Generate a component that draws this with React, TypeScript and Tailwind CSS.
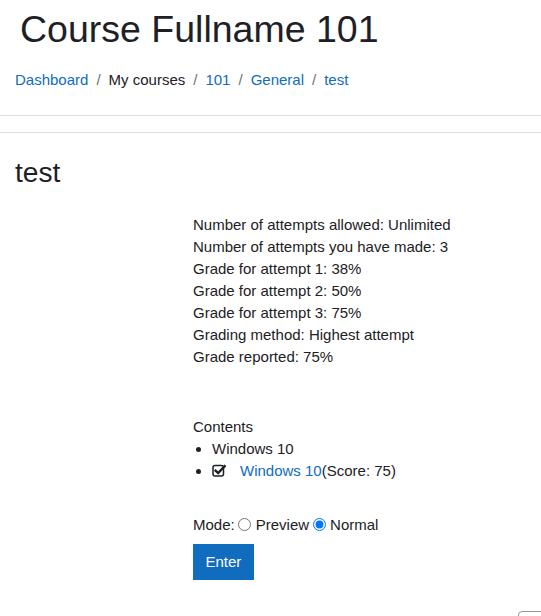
const crumbs: { label: string; link: boolean }[] = [
  { label: "Dashboard", link: true },
  { label: "My courses", link: false },
  { label: "101", link: true },
  { label: "General", link: true },
  { label: "test", link: true },
];

const info = [
  "Number of attempts allowed: Unlimited",
  "Number of attempts you have made: 3",
  "Grade for attempt 1: 38%",
  "Grade for attempt 2: 50%",
  "Grade for attempt 3: 75%",
  "Grading method: Highest attempt",
  "Grade reported: 75%",
];

function CheckSquareIcon() {
  return (
    <svg width="14" height="14" viewBox="0 0 14 14" className="inline-block align-[-1px]">
      <rect x="1" y="2.5" width="10.5" height="10.5" rx="2" fill="none" stroke="#1d2125" strokeWidth="1.5" />
      <path d="M3.6 7.6 L6.2 10.1 L12.6 3.2" fill="none" stroke="#1d2125" strokeWidth="2.4" strokeLinecap="square" />
    </svg>
  );
}

export default function App() {
  return (
    <div className="min-h-screen bg-white text-[#1d2125] font-['Liberation_Sans',Arial,sans-serif] text-[15px] leading-[22px]">
      {/* Page header */}
      <header className="px-[15px]">
        <h1 className="pl-[5px] pt-[7px] text-[37.5px] leading-[45px] font-normal">Course Fullname 101</h1>
        <nav className="mt-[17px] flex items-center">
          {crumbs.map((c, i) => (
            <span key={c.label} className="flex items-center">
              {i > 0 && <span className="px-2 text-[#6a737b]">/</span>}
              <span className={c.link ? "text-[#0f6cbf]" : ""}>{c.label}</span>
            </span>
          ))}
        </nav>
      </header>

      <div className="mt-[24px] border-t border-[#dee2e6]" />
      <div className="mt-4 border-t border-[#dee2e6]" />

      {/* Activity */}
      <main className="px-[15px]">
        <h2 className="mt-[22.5px] text-[28.125px] leading-[33.75px] font-normal">test</h2>

        <div className="ml-[178px] mt-[24.5px]">
          <div>
            {info.map((line) => (
              <p key={line}>{line}</p>
            ))}
          </div>

          <div className="mt-[48px]">
            <p>Contents</p>
            <ul className="list-disc pl-[19px]">
              <li>Windows 10</li>
              <li>
                <span className="mr-[14px]">
                  <CheckSquareIcon />
                </span>
                <span className="text-[#0f6cbf]">Windows 10</span>(Score: 75)
              </li>
            </ul>
          </div>

          <div className="mt-[32px] flex items-center">
            <span>Mode:</span>
            <input type="radio" name="mode" className="ml-[3.5px] mr-[4.5px] w-[13px] h-[13px]" />
            <span>Preview</span>
            <input type="radio" name="mode" defaultChecked className="ml-[3.5px] mr-[4.5px] w-[13px] h-[13px]" />
            <span>Normal</span>
          </div>

          <button className="mt-[8.5px] h-9 px-[12.5px] bg-[#0f6cbf] text-white leading-[22px]">Enter</button>
        </div>
      </main>

      <div className="fixed left-[518px] top-[611px] w-9 h-9 border border-[#8f959e] rounded-sm bg-white" />
    </div>
  );
}
